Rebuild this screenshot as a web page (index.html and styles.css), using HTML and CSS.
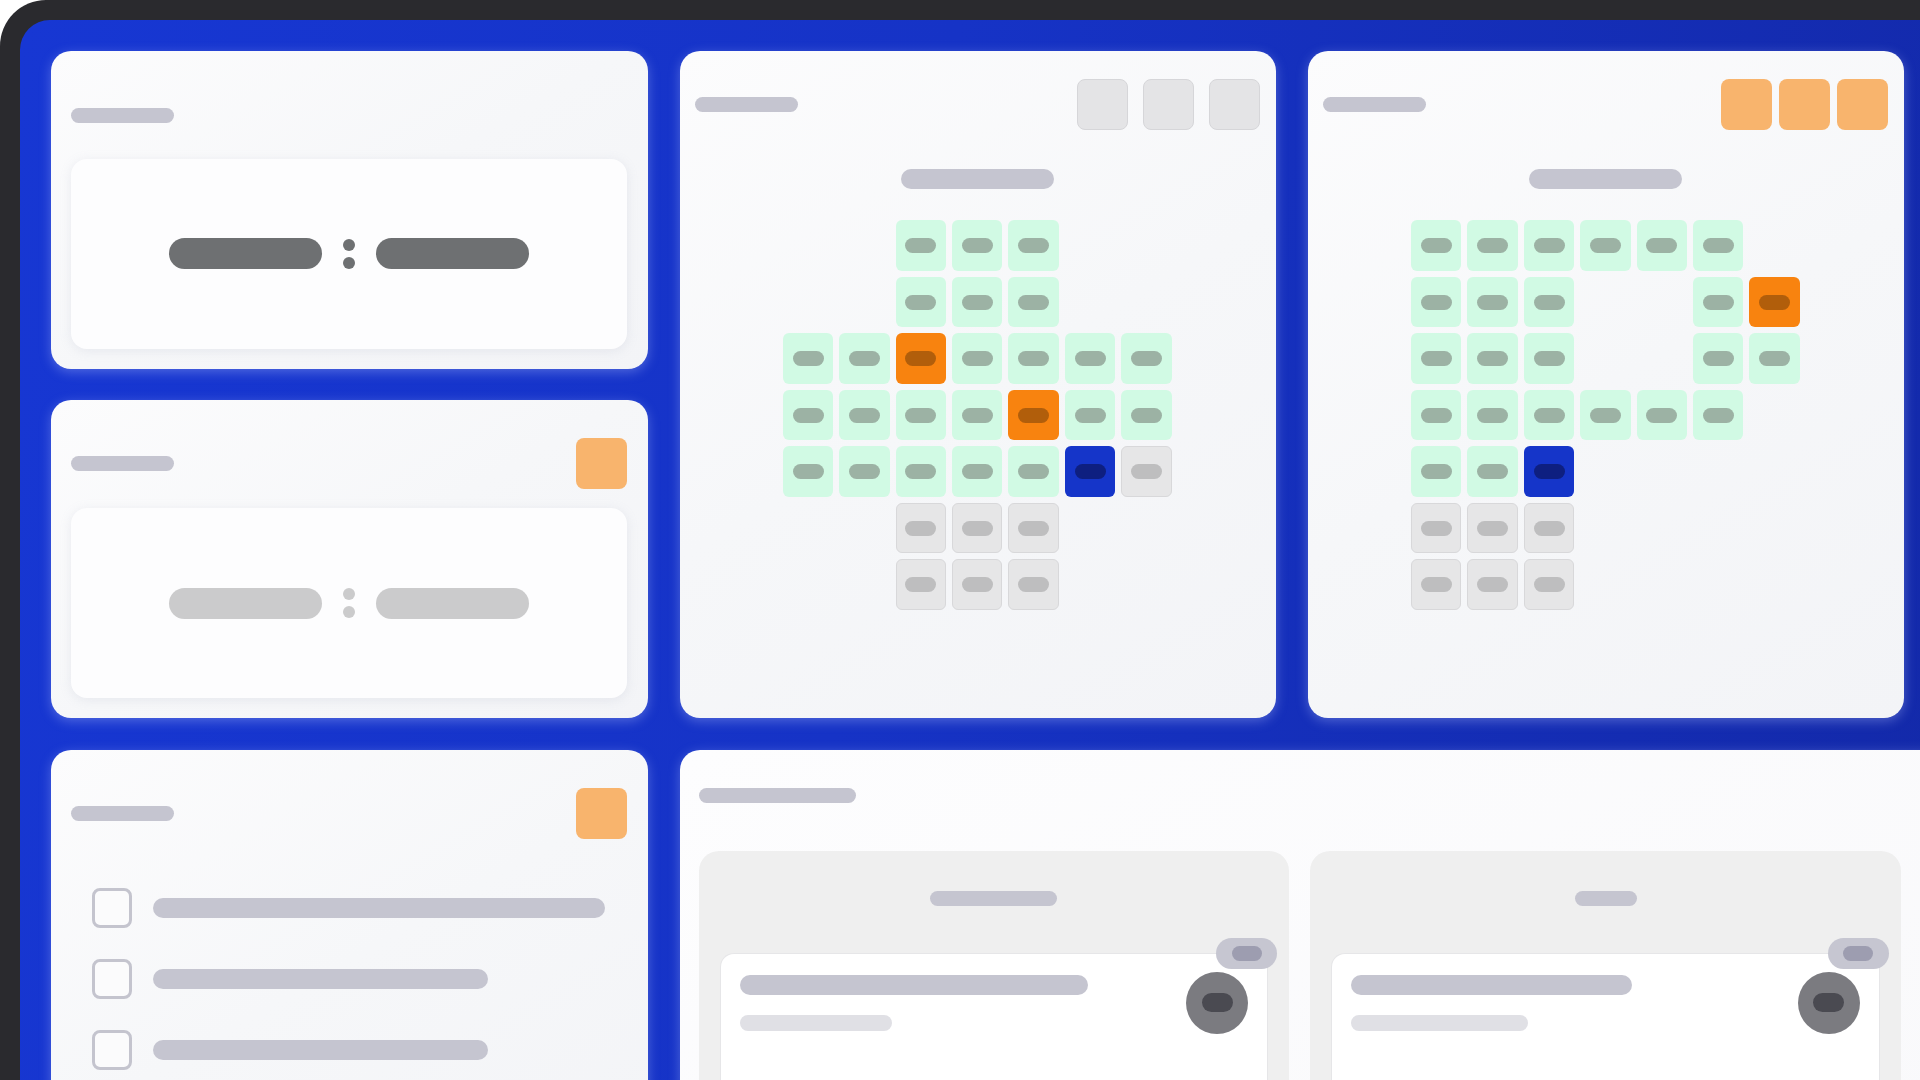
FILE: index.html
```html
<!DOCTYPE html>
<html lang="en">
<head>
<meta charset="utf-8">
<title>Seat planner</title>
<link rel="stylesheet" href="styles.css">
</head>
<body>
<div class="frame">
  <div class="panel">
    <div class="layout">

      <section class="card card-a">
        <div class="card-head">
          <div class="pill title"></div>
        </div>
        <div class="timebox">
          <div class="tpill dark"></div>
          <div class="colon dark"><span></span><span></span></div>
          <div class="tpill dark"></div>
        </div>
      </section>

      <section class="card card-b">
        <div class="card-head">
          <div class="pill title"></div>
          <div class="sq orange"></div>
        </div>
        <div class="timebox">
          <div class="tpill light"></div>
          <div class="colon light"><span></span><span></span></div>
          <div class="tpill light"></div>
        </div>
      </section>

      <section class="card card-c">
        <div class="card-head">
          <div class="pill title"></div>
          <div class="sq orange"></div>
        </div>
        <ul class="checklist">
          <li><span class="check"></span><span class="pill line w1"></span></li>
          <li><span class="check"></span><span class="pill line w2"></span></li>
          <li><span class="check"></span><span class="pill line w2"></span></li>
        </ul>
      </section>

      <section class="card map-card card-d">
        <div class="map-head">
          <div class="pill title"></div>
          <div class="sq-group">
            <div class="sq grey"></div>
            <div class="sq grey"></div>
            <div class="sq grey"></div>
          </div>
        </div>
        <div class="pill map-title"></div>
        <div class="seats">
          <i class="seat none"></i><i class="seat none"></i><i class="seat m"></i><i class="seat m"></i><i class="seat m"></i><i class="seat none"></i><i class="seat none"></i>
          <i class="seat none"></i><i class="seat none"></i><i class="seat m"></i><i class="seat m"></i><i class="seat m"></i><i class="seat none"></i><i class="seat none"></i>
          <i class="seat m"></i><i class="seat m"></i><i class="seat o"></i><i class="seat m"></i><i class="seat m"></i><i class="seat m"></i><i class="seat m"></i>
          <i class="seat m"></i><i class="seat m"></i><i class="seat m"></i><i class="seat m"></i><i class="seat o"></i><i class="seat m"></i><i class="seat m"></i>
          <i class="seat m"></i><i class="seat m"></i><i class="seat m"></i><i class="seat m"></i><i class="seat m"></i><i class="seat b"></i><i class="seat g"></i>
          <i class="seat none"></i><i class="seat none"></i><i class="seat g"></i><i class="seat g"></i><i class="seat g"></i><i class="seat none"></i><i class="seat none"></i>
          <i class="seat none"></i><i class="seat none"></i><i class="seat g"></i><i class="seat g"></i><i class="seat g"></i><i class="seat none"></i><i class="seat none"></i>
        </div>
      </section>

      <section class="card map-card card-e">
        <div class="map-head">
          <div class="pill title"></div>
          <div class="sq-group">
            <div class="sq orange"></div>
            <div class="sq orange"></div>
            <div class="sq orange"></div>
          </div>
        </div>
        <div class="pill map-title"></div>
        <div class="seats">
          <i class="seat m"></i><i class="seat m"></i><i class="seat m"></i><i class="seat m"></i><i class="seat m"></i><i class="seat m"></i><i class="seat none"></i>
          <i class="seat m"></i><i class="seat m"></i><i class="seat m"></i><i class="seat none"></i><i class="seat none"></i><i class="seat m"></i><i class="seat o"></i>
          <i class="seat m"></i><i class="seat m"></i><i class="seat m"></i><i class="seat none"></i><i class="seat none"></i><i class="seat m"></i><i class="seat m"></i>
          <i class="seat m"></i><i class="seat m"></i><i class="seat m"></i><i class="seat m"></i><i class="seat m"></i><i class="seat m"></i><i class="seat none"></i>
          <i class="seat m"></i><i class="seat m"></i><i class="seat b"></i><i class="seat none"></i><i class="seat none"></i><i class="seat none"></i><i class="seat none"></i>
          <i class="seat g"></i><i class="seat g"></i><i class="seat g"></i><i class="seat none"></i><i class="seat none"></i><i class="seat none"></i><i class="seat none"></i>
          <i class="seat g"></i><i class="seat g"></i><i class="seat g"></i><i class="seat none"></i><i class="seat none"></i><i class="seat none"></i><i class="seat none"></i>
        </div>
      </section>

      <section class="card card-f">
        <div class="pill f-title"></div>
        <div class="columns">
          <div class="column">
            <div class="pill col-title wide"></div>
            <div class="item">
              <div class="badge"><span></span></div>
              <div class="item-text">
                <div class="pill item-line l1"></div>
                <div class="pill item-sub s1"></div>
              </div>
              <div class="avatar"><span></span></div>
            </div>
          </div>
          <div class="column">
            <div class="pill col-title narrow"></div>
            <div class="item">
              <div class="badge"><span></span></div>
              <div class="item-text">
                <div class="pill item-line l2"></div>
                <div class="pill item-sub s2"></div>
              </div>
              <div class="avatar"><span></span></div>
            </div>
          </div>
        </div>
      </section>

    </div>
  </div>
</div>
</body>
</html>
```

FILE: styles.css
```css
* { box-sizing: border-box; }

html, body {
  margin: 0;
  padding: 0;
  width: 1920px;
  height: 1080px;
  overflow: hidden;
  background: #ffffff;
  font-family: "Inter", "Liberation Sans", sans-serif;
}

.frame {
  width: 1920px;
  height: 1080px;
  background: #2a2a2e;
  border-top-left-radius: 46px;
  padding: 19.6px 0 0 19.6px;
}

.panel {
  width: 100%;
  height: 100%;
  background: linear-gradient(100deg, #1737d3 0%, #1633c6 45%, #1329a9 100%);
  border-top-left-radius: 30px;
  padding: 31.8px 0 0 31.8px;
  overflow: hidden;
}

.layout {
  display: grid;
  grid-template-columns: 596.4px 596.4px 596.4px;
  grid-template-rows: 317.2px 318.4px 420px;
  column-gap: 31.8px;
  row-gap: 31.4px;
}

.card {
  border-radius: 20px;
  background: linear-gradient(150deg, #fcfcfd 0%, #f6f7f9 50%, #f3f4f7 100%);
  box-shadow: 0 3px 12px rgba(190, 200, 255, 0.35);
}

.pill {
  display: block;
  border-radius: 999px;
  background: #c5c5d0;
}

/* ---------- left cards ---------- */
.card-a, .card-b, .card-c {
  display: flex;
  flex-direction: column;
  padding: 20px 21px 20px 20px;
}

.card-a { grid-column: 1; grid-row: 1; }
.card-b { grid-column: 1; grid-row: 2; }
.card-c { grid-column: 1; grid-row: 3; }

.card-head {
  height: 88px;
  display: flex;
  align-items: center;
  justify-content: space-between;
  flex: none;
}

.title {
  width: 103px;
  height: 15px;
}

.sq {
  width: 51px;
  height: 51px;
  border-radius: 8px;
}

.sq.orange { background: #f8b46d; }
.sq.grey {
  background: #e4e4e6;
  border: 1px solid #d6d6d9;
}

.timebox {
  flex: 1;
  border-radius: 16px;
  background: #fdfdfe;
  box-shadow: 0 2px 12px rgba(150, 155, 180, 0.16);
  display: flex;
  align-items: center;
  justify-content: center;
  gap: 21px;
}

.tpill {
  width: 153px;
  height: 31px;
  border-radius: 999px;
}

.tpill.dark { background: #6e7072; }
.tpill.light { background: #cbcbcc; }

.colon {
  display: flex;
  flex-direction: column;
  gap: 6px;
}

.colon span {
  display: block;
  width: 12px;
  height: 12px;
  border-radius: 50%;
}

.colon.dark span { background: #6e7072; }
.colon.light span { background: #cbcbcc; }

.checklist {
  list-style: none;
  margin: 30px 0 0;
  padding: 0 0 0 21px;
  display: flex;
  flex-direction: column;
  gap: 31px;
}

.checklist li {
  display: flex;
  align-items: center;
  gap: 21px;
  height: 40px;
}

.check {
  width: 40px;
  height: 40px;
  border: 3px solid #c4c4ce;
  border-radius: 8px;
  background: #fbfbfc;
  flex: none;
}

.line { height: 20px; }
.line.w1 { width: 452px; }
.line.w2 { width: 335px; }

/* ---------- seat maps ---------- */
.map-card {
  grid-row: 1 / 3;
  padding: 28px 16px 16px 15px;
  display: flex;
  flex-direction: column;
}

.card-d { grid-column: 2; }
.card-e { grid-column: 3; }

.map-head {
  height: 51px;
  display: flex;
  align-items: center;
  justify-content: space-between;
}

.sq-group {
  display: flex;
  gap: 15px;
}

.card-e .sq-group { gap: 7px; }

.map-title {
  width: 153px;
  height: 20px;
  margin: 39px auto 0;
}

.seats {
  margin-top: 31px;
  display: grid;
  grid-template-columns: repeat(7, 50.4px);
  grid-auto-rows: 50.5px;
  gap: 6px;
  justify-content: center;
}

.seat {
  display: flex;
  align-items: center;
  justify-content: center;
  border-radius: 6px;
}

.seat::after {
  content: "";
  width: 31px;
  height: 15px;
  border-radius: 999px;
}

.seat.m { background: #d1fae4; }
.seat.m::after { background: #9cb2a4; }

.seat.o { background: #f8830f; }
.seat.o::after { background: #b15e0b; }

.seat.b { background: #1535c9; }
.seat.b::after { background: #0e1f80; }

.seat.g {
  background: #e6e6e7;
  border: 1px solid #d8d8da;
}
.seat.g::after { background: #bebebf; }

.seat.none { visibility: hidden; }

/* ---------- bottom wide card ---------- */
.card-f {
  grid-column: 2 / 4;
  grid-row: 3;
  margin-right: -48px;
  padding: 38px 19px 0;
  display: flex;
  flex-direction: column;
  background: linear-gradient(150deg, #fdfdfe 0%, #f9f9fb 100%);
}

.f-title {
  width: 157px;
  height: 15px;
}

.columns {
  margin-top: 48px;
  flex: 1;
  display: grid;
  grid-template-columns: 590.7px 590.7px;
  gap: 21px;
}

.column {
  background: #efefef;
  border-radius: 20px 20px 0 0;
  padding: 40px 21px 0;
  display: flex;
  flex-direction: column;
}

.col-title {
  height: 15px;
  margin: 0 auto;
}

.col-title.wide { width: 127px; }
.col-title.narrow { width: 62px; }

.item {
  position: relative;
  margin-top: 47px;
  flex: 1;
  background: #ffffff;
  border: 1px solid #e6e6e8;
  border-bottom: none;
  border-radius: 14px 14px 0 0;
  padding: 18px 19px 0 19px;
  display: flex;
  justify-content: space-between;
  align-items: flex-start;
}

.badge {
  position: absolute;
  top: -16px;
  right: -10px;
  width: 61px;
  height: 31px;
  border-radius: 999px;
  background: #c6c6d1;
  display: flex;
  align-items: center;
  justify-content: center;
}

.badge span {
  width: 30px;
  height: 15px;
  border-radius: 999px;
  background: #9d9db0;
}

.item-text {
  padding-top: 3px;
  display: flex;
  flex-direction: column;
  gap: 20px;
}

.item-line { height: 20px; }
.item-line.l1 { width: 348px; }
.item-line.l2 { width: 281px; }

.item-sub {
  height: 16px;
  background: #e0e0e5;
}
.item-sub.s1 { width: 152px; }
.item-sub.s2 { width: 177px; }

.avatar {
  width: 62px;
  height: 62px;
  border-radius: 50%;
  background: #7b7b80;
  display: flex;
  align-items: center;
  justify-content: center;
  flex: none;
}

.avatar span {
  width: 31px;
  height: 19px;
  border-radius: 999px;
  background: #4a4a51;
}
```
